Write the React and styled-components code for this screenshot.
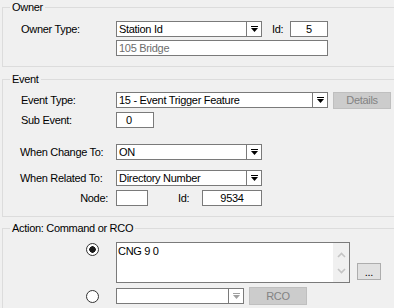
import React from "react";
import styled, { createGlobalStyle } from "styled-components";

const GlobalStyle = createGlobalStyle`
  html, body {
    margin: 0;
    padding: 0;
    background: #f0f0f0;
  }
  body {
    font-family: "Liberation Sans", Arial, sans-serif;
    font-size: 11px;
    letter-spacing: -0.3px;
    color: #000;
  }
`;

const Arrow = ({ disabled }) => (
  <svg width="7" height="6" viewBox="0 0 7 6">
    <rect x="0" y="0" width="7" height="1" fill={disabled ? "#a0a0a0" : "#000"} />
    <polygon points="0,2 7,2 3.5,6" fill={disabled ? "#a0a0a0" : "#000"} />
  </svg>
);

const Chevron = ({ up }) => (
  <svg width="9" height="6" viewBox="0 0 9 6">
    <polyline
      points={up ? "1,5 4.5,1.5 8,5" : "1,1 4.5,4.5 8,1"}
      fill="none"
      stroke="#c4c4c4"
      strokeWidth="1.6"
    />
  </svg>
);

const App = () => {
  return (
    <>
      <GlobalStyle />
      <Page>
        <Group>
          <Legend>Owner</Legend>
          <Body $top={8} $bottom={10}>
            <Row>
              <Label>Owner Type:</Label>
              <Combo $width={146}>
                <ComboText>Station Id</ComboText>
                <DropButton>
                  <Arrow />
                </DropButton>
              </Combo>
              <SideLabel $left={10} $width={18}>Id:</SideLabel>
              <TextBox $width={38} $center>5</TextBox>
            </Row>
            <Row $gap={3}>
              <Label />
              <TextBox $width={212} $disabled>105 Bridge</TextBox>
            </Row>
          </Body>
        </Group>

        <Group $gap={6}>
          <Legend>Event</Legend>
          <Body $top={7} $bottom={10}>
            <Row>
              <Label>Event Type:</Label>
              <Combo $width={212}>
                <ComboText>15 - Event Trigger Feature</ComboText>
                <DropButton>
                  <Arrow />
                </DropButton>
              </Combo>
              <Button $width={58} $left={5} $disabled>Details</Button>
            </Row>
            <Row $gap={4}>
              <Label>Sub Event:</Label>
              <TextBox $width={38} $indent={9}>0</TextBox>
            </Row>
            <Row $gap={16}>
              <Label $narrow>When Change To:</Label>
              <Combo $width={146}>
                <ComboText>ON</ComboText>
                <DropButton>
                  <Arrow />
                </DropButton>
              </Combo>
            </Row>
            <Row $gap={10}>
              <Label $narrow>When Related To:</Label>
              <Combo $width={146}>
                <ComboText>Directory Number</ComboText>
                <DropButton>
                  <Arrow />
                </DropButton>
              </Combo>
            </Row>
            <Row $gap={4}>
              <Label $right>Node:</Label>
              <TextBox $width={32} />
              <SideLabel $left={30} $width={24}>Id:</SideLabel>
              <TextBox $width={60} $center>9534</TextBox>
            </Row>
          </Body>
        </Group>

        <Group $gap={5}>
          <Legend>Action: Command or RCO</Legend>
          <Body $top={8} $bottom={20}>
            <ActionRow>
              <RadioSlot>
                <Radio $checked />
              </RadioSlot>
              <Memo>
                <MemoText>CNG 9 0</MemoText>
                <ScrollTrack>
                  <Chevron up />
                  <Chevron />
                </ScrollTrack>
              </Memo>
              <Button $width={24} $left={7} $bottomAlign>...</Button>
            </ActionRow>
            <ActionRow $gap={4} $center>
              <RadioSlot>
                <Radio />
              </RadioSlot>
              <Combo $width={128}>
                <ComboText />
                <DropButton>
                  <Arrow disabled />
                </DropButton>
              </Combo>
              <Button $width={58} $left={5} $height={18} $disabled>RCO</Button>
            </ActionRow>
          </Body>
        </Group>
      </Page>
    </>
  );
};

const Page = styled.div`
  width: 394px;
  height: 308px;
  overflow: hidden;
  padding-top: 1px;
  box-sizing: border-box;
`;

const Group = styled.fieldset`
  margin: ${(p) => p.$gap || 0}px 0 0 2px;
  padding: 0;
  width: 400px;
  min-width: 0;
  border: 1px solid #dcdcdc;
  box-sizing: border-box;
`;

const Legend = styled.legend`
  margin-left: 7px;
  padding: 0 2px;
  line-height: 12px;
  height: 12px;
`;

const Body = styled.div`
  padding: ${(p) => p.$top}px 0 ${(p) => p.$bottom}px 18px;
  display: flex;
  flex-direction: column;
`;

const Row = styled.div`
  display: flex;
  align-items: center;
  height: 16px;
  margin-top: ${(p) => p.$gap || 0}px;
`;

const Label = styled.span`
  width: ${(p) => (p.$right ? 87 : 95)}px;
  margin-right: ${(p) => (p.$right ? 8 : 0)}px;
  margin-left: ${(p) => (p.$narrow ? -1 : 0)}px;
  padding-right: ${(p) => (p.$narrow ? 1 : 0)}px;
  text-align: ${(p) => (p.$right ? "right" : "left")};
  flex-shrink: 0;
  white-space: nowrap;
`;

const SideLabel = styled.span`
  margin-left: ${(p) => p.$left}px;
  width: ${(p) => p.$width}px;
  flex-shrink: 0;
`;

const Field = styled.div`
  height: 16px;
  box-sizing: border-box;
  border: 1px solid #7a7a7a;
  background: #fff;
  flex-shrink: 0;
`;

const Combo = styled(Field)`
  width: ${(p) => p.$width}px;
  display: flex;
`;

const ComboText = styled.span`
  flex: 1;
  padding-left: 2px;
  line-height: 14px;
  white-space: nowrap;
  overflow: hidden;
`;

const DropButton = styled.span`
  width: 14px;
  border-left: 1px solid #7a7a7a;
  display: flex;
  align-items: center;
  justify-content: center;
`;

const TextBox = styled(Field)`
  width: ${(p) => p.$width}px;
  line-height: 14px;
  padding-left: ${(p) => (p.$center ? 0 : p.$indent || 2)}px;
  text-align: ${(p) => (p.$center ? "center" : "left")};
  color: ${(p) => (p.$disabled ? "#6d6d6d" : "#000")};
`;

const Button = styled.div`
  width: ${(p) => p.$width}px;
  height: ${(p) => p.$height || 17}px;
  margin-left: ${(p) => p.$left}px;
  align-self: ${(p) => (p.$bottomAlign ? "flex-end" : "center")};
  margin-bottom: ${(p) => (p.$bottomAlign ? 3 : 0)}px;
  box-sizing: border-box;
  border: 1px solid ${(p) => (p.$disabled ? "#bfbfbf" : "#adadad")};
  background: ${(p) => (p.$disabled ? "#cccccc" : "#e1e1e1")};
  color: ${(p) => (p.$disabled ? "#838383" : "#000")};
  display: flex;
  align-items: center;
  justify-content: center;
  flex-shrink: 0;
`;

const ActionRow = styled.div`
  display: flex;
  align-items: ${(p) => (p.$center ? "center" : "flex-start")};
  margin-top: ${(p) => p.$gap || 0}px;
  height: ${(p) => (p.$center ? "18px" : "auto")};
`;

const RadioSlot = styled.div`
  width: 95px;
  padding-left: 65px;
  box-sizing: border-box;
  flex-shrink: 0;
`;

const Radio = styled.span`
  display: block;
  width: 13px;
  height: 13px;
  margin-top: ${(p) => (p.$checked ? 1 : 0)}px;
  box-sizing: border-box;
  border: 1px solid #333;
  border-radius: 50%;
  background: ${(p) =>
    p.$checked
      ? "radial-gradient(circle, #1a1a1a 0 3px, #fff 3.5px)"
      : "#fff"};
`;

const Memo = styled.div`
  width: 234px;
  height: 41px;
  box-sizing: border-box;
  border: 1px solid #7a7a7a;
  background: #fff;
  display: flex;
  flex-shrink: 0;
`;

const MemoText = styled.div`
  flex: 1;
  padding: 2px 1px;
  line-height: 12px;
`;

const ScrollTrack = styled.div`
  width: 16px;
  background: #f0f0f0;
  display: flex;
  flex-direction: column;
  justify-content: space-between;
  align-items: center;
  padding: 9px 0 8px;
  box-sizing: border-box;
`;

export default App;
